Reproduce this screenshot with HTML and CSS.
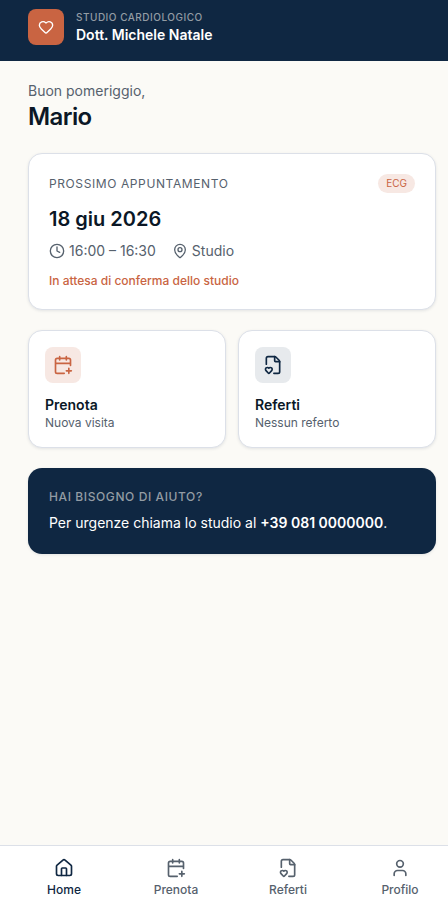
FILE: index.html
```html
<!DOCTYPE html>
<html lang="it">
<head>
<meta charset="utf-8">
<meta name="viewport" content="width=device-width, initial-scale=1">
<title>Studio Cardiologico</title>
<link rel="stylesheet" href="styles.css">
</head>
<body>
<svg class="sprite" aria-hidden="true">
  <symbol id="calendar" viewBox="0 0 24 24"><path d="M16 19h6M16 2v4M19 16v6M21 12.598V6a2 2 0 0 0-2-2H5a2 2 0 0 0-2 2v14a2 2 0 0 0 2 2h8.5M3 10h18M8 2v4"/></symbol>
  <symbol id="report" viewBox="0 0 24 24"><path d="M13 22h5a2 2 0 0 0 2-2V8a2.4 2.4 0 0 0-.706-1.706l-3.588-3.588A2.4 2.4 0 0 0 14 2H6a2 2 0 0 0-2 2v7"/><path d="M14 2v5a1 1 0 0 0 1 1h5"/><path d="M3.62 18.8A2.25 2.25 0 1 1 7 15.836a2.25 2.25 0 1 1 3.38 2.966l-2.626 2.856a1 1 0 0 1-1.507 0z"/></symbol>
</svg>
<div class="app">
  <header class="header">
    <div class="logo"><svg class="icon icon-sm" viewBox="0 0 24 24"><path d="M2 9.5a5.5 5.5 0 0 1 9.591-3.676.56.56 0 0 0 .818 0A5.49 5.49 0 0 1 22 9.5c0 2.29-1.5 4-3 5.5l-5.492 5.313a2 2 0 0 1-3 .019L5 15c-1.500-1.500-3-3.200-3-5.500"/></svg></div>
    <div>
      <div class="brand-label">Studio Cardiologico</div>
      <div class="brand-name">Dott. Michele Natale</div>
    </div>
  </header>
  <main class="main">
    <div class="greeting">Buon pomeriggio,</div>
    <h1 class="name">Mario</h1>
    <section class="card appointment">
      <div class="card-top"><span class="eyebrow">Prossimo appuntamento</span><span class="badge">ECG</span></div>
      <h2 class="date">18 giu 2026</h2>
      <div class="meta">
        <span class="meta-item"><svg class="icon icon-sm" viewBox="0 0 24 24"><circle cx="12" cy="12" r="10"/><path d="M12 6v6l4 2"/></svg>16:00 – 16:30</span>
        <span class="meta-item"><svg class="icon icon-sm" viewBox="0 0 24 24"><path d="M20 10c0 4.993-5.539 10.193-7.399 11.799a1 1 0 0 1-1.202 0C9.539 20.193 4 14.993 4 10a8 8 0 0 1 16 0"/><circle cx="12" cy="10" r="3"/></svg>Studio</span>
      </div>
      <p class="status">In attesa di conferma dello studio</p>
    </section>
    <div class="actions">
      <a class="card action">
        <span class="tile tile-accent"><svg class="icon"><use href="#calendar"/></svg></span>
        <span class="action-title">Prenota</span>
        <span class="action-text">Nuova visita</span>
      </a>
      <a class="card action">
        <span class="tile tile-navy"><svg class="icon"><use href="#report"/></svg></span>
        <span class="action-title">Referti</span>
        <span class="action-text">Nessun referto</span>
      </a>
    </div>
    <section class="help">
      <div class="help-label">Hai bisogno di aiuto?</div>
      <p class="help-text">Per urgenze chiama lo studio al <strong>+39 081 0000000</strong>.</p>
    </section>
  </main>
  <nav class="nav">
    <a class="nav-item active"><svg class="icon" viewBox="0 0 24 24"><path d="M15 21v-8a1 1 0 0 0-1-1h-4a1 1 0 0 0-1 1v8"/><path d="M3 10a2 2 0 0 1 .709-1.528l7-6a2 2 0 0 1 2.582 0l7 6A2 2 0 0 1 21 10v9a2 2 0 0 1-2 2H5a2 2 0 0 1-2-2z"/></svg>Home</a>
    <a class="nav-item"><svg class="icon"><use href="#calendar"/></svg>Prenota</a>
    <a class="nav-item"><svg class="icon"><use href="#report"/></svg>Referti</a>
    <a class="nav-item"><svg class="icon" viewBox="0 0 24 24"><path d="M19 21v-2a4 4 0 0 0-4-4H9a4 4 0 0 0-4 4v2"/><circle cx="12" cy="7" r="4"/></svg>Profilo</a>
  </nav>
</div>
</body>
</html>
```
FILE: styles.css
```css
* { box-sizing: border-box; margin: 0; padding: 0; }
body { font-family: Inter, sans-serif; background: #fbfaf6; color: #0b1726; overflow: hidden; }
.sprite { display: none; }
.app { height: 907px; display: flex; flex-direction: column; overflow: hidden; }
.icon { width: 20px; height: 20px; flex: none; fill: none; stroke: currentColor; stroke-width: 2; stroke-linecap: round; stroke-linejoin: round; }
.icon-sm { width: 16px; height: 16px; }

.header { height: 61px; flex: none; padding: 9px 28px 0; display: flex; gap: 12px; background: #0f2742; color: #fff; }
.logo { width: 36px; height: 36px; border-radius: 8px; background: #c96442; display: flex; align-items: center; justify-content: center; }
.brand-label { font-size: 10px; line-height: 15px; margin-top: 1px; font-weight: 500; letter-spacing: .5px; text-transform: uppercase; color: #939ca4; }
.brand-name { font-size: 14px; line-height: 20px; font-weight: 600; }

.main { flex: 1; padding: 20px 12px 0 28px; }
.greeting { font-size: 14px; line-height: 20px; color: #56616d; }
.name { font-size: 24px; line-height: 32px; font-weight: 600; letter-spacing: -.6px; }
.card { background: #fff; border: 1px solid #dce0e8; border-radius: 14px; box-shadow: 0 1px 3px rgba(15, 39, 66, .1); }
.appointment { margin-top: 20px; padding: 20px; height: 157px; }
.card-top { display: flex; justify-content: space-between; align-items: center; height: 19px; }
.eyebrow { font-size: 12px; line-height: 16px; letter-spacing: .6px; text-transform: uppercase; color: #56616d; }
.badge { font-size: 10px; line-height: 15px; padding: 2px 8px; border-radius: 10px; background: #f7e8e3; color: #c96442; }
.date { font-size: 20px; line-height: 28px; font-weight: 600; margin-top: 12px; }
.meta { display: flex; gap: 16px; margin-top: 8px; font-size: 14px; line-height: 20px; color: #56616d; }
.meta-item { display: flex; align-items: center; gap: 4px; }
.status { margin-top: 12px; font-size: 12px; line-height: 16px; font-weight: 500; color: #c96442; }

.actions { display: grid; grid-template-columns: 1fr 1fr; gap: 12px; margin-top: 20px; }
.action { height: 118px; padding: 16px; display: flex; flex-direction: column; align-items: flex-start; }
.tile { width: 36px; height: 36px; border-radius: 8px; display: flex; align-items: center; justify-content: center; }
.tile-accent { background: #f7e8e3; color: #c96442; }
.tile-navy { background: #e7eaed; color: #0f2742; }
.action-title { margin-top: 12px; font-size: 14px; line-height: 20px; font-weight: 600; }
.action-text { font-size: 12px; line-height: 16px; color: #56616d; }

.help { height: 86px; margin-top: 20px; padding: 21px; border-radius: 14px; background: #0f2742; color: #fff; box-shadow: 0 1px 3px rgba(15, 39, 66, .1); }
.help-label { font-size: 12px; line-height: 16px; font-weight: 500; letter-spacing: .6px; text-transform: uppercase; color: #939ca4; }
.help-text { margin-top: 8px; font-size: 14px; line-height: 20px; font-weight: 400; }
.help-text strong { font-weight: 600; }

.nav { height: 62px; flex: none; padding-left: 8px; display: grid; grid-template-columns: repeat(4, 112px); background: #fff; border-top: 1px solid #dce0e8; }
.nav-item { display: flex; flex-direction: column; align-items: center; gap: 4px; padding-top: 12px; font-size: 12px; line-height: 16px; font-weight: 500; color: #56616d; }
.active { color: #0f2742; }
```
